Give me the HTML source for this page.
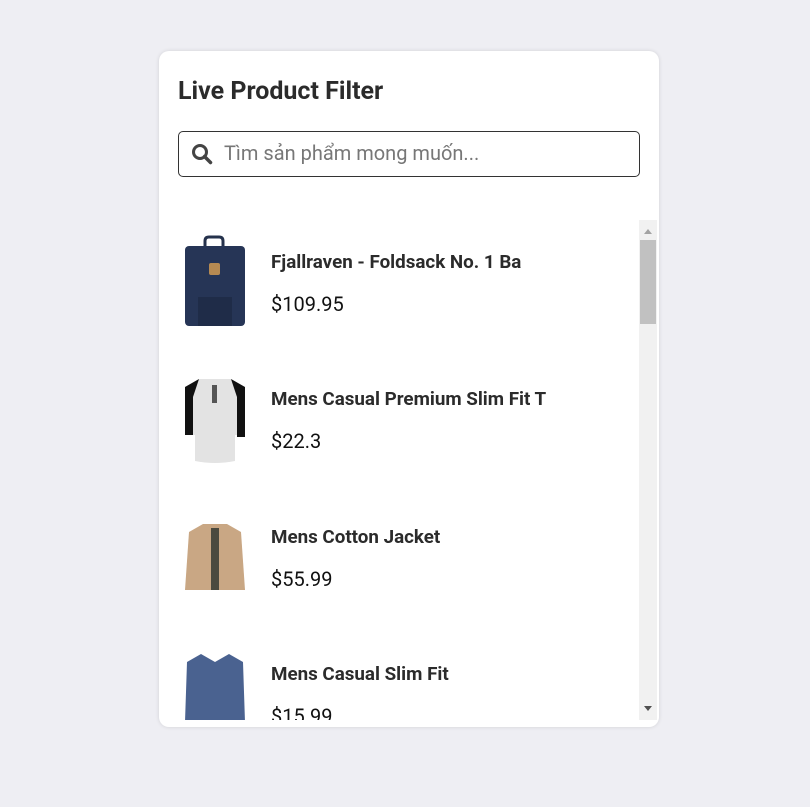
<!DOCTYPE html>
<html><head><meta charset="utf-8"><style>
html,body{margin:0;padding:0;background:#eeeef3;width:810px;height:807px;overflow:hidden;font-family:"Roboto","Liberation Sans",sans-serif;}
.card{position:absolute;left:159px;top:51px;width:500px;height:676px;background:#fff;border-radius:10px;box-shadow:0 0 4px rgba(0,0,0,.12);overflow:hidden;}
h1{position:absolute;left:19px;top:26px;margin:0;font-size:25px;font-weight:bold;color:#2b2b2b;}
.search{position:absolute;left:19px;top:80px;width:460px;height:44px;border:1px solid #333;border-radius:5px;}
.search svg{position:absolute;left:12px;top:11px}
.search span{position:absolute;left:45px;top:9px;font-size:20px;color:#777;}
.list{position:absolute;left:0;top:169px;width:500px;height:500px;overflow:hidden;}
.sb{position:absolute;left:480px;top:169px;width:18px;height:500px;background:#f1f1f1;}
.thumb{position:absolute;left:1px;top:20px;width:16px;height:84px;background:#c1c1c1;}
.item{position:absolute;left:0;width:480px;height:137px;}
.item svg{position:absolute;left:24px;}
.name{position:absolute;left:112px;font-size:18.8px;font-weight:bold;color:#2b2b2b;white-space:nowrap;}
.price{position:absolute;left:112px;font-size:20px;color:#111;}
</style></head><body>
<div class="card">
<h1>Live Product Filter</h1>
<div class="search">
<svg width="22" height="22" viewBox="0 0 22 22"><circle cx="9" cy="9" r="6.5" fill="none" stroke="#444" stroke-width="3"/><line x1="13.5" y1="13.5" x2="19.5" y2="19.5" stroke="#444" stroke-width="3.5" stroke-linecap="round"/></svg>
<span>Tìm sản phẩm mong muốn...</span>
</div>
<div class="list">
<div class="item" style="top:0">
<svg width="64" height="100" viewBox="0 0 64 100" style="top:15px"><path d="M22 12 V6 Q22 2 26 2 H36 Q40 2 40 6 V12" fill="none" stroke="#25324c" stroke-width="3"/><rect x="2" y="11" width="60" height="80" rx="4" fill="#263556"/><rect x="26" y="28" width="11" height="12" rx="2" fill="#b68a52"/><rect x="15" y="62" width="34" height="29" fill="#1f2c48"/></svg>
<div class="name" style="top:31px">Fjallraven - Foldsack No. 1 Ba</div>
<div class="price" style="top:72px">$109.95</div>
</div>
<div class="item" style="top:137px">
<svg width="64" height="90" viewBox="0 0 64 90" style="top:20px"><path d="M16 2 H48 L62 10 V58 H52 V84 Q32 88 12 84 V58 H2 V10 Z" fill="#e3e3e3"/><path d="M16 2 L2 10 V58 H10 V20 Z M48 2 L62 10 V60 H54 V20 Z" fill="#111"/><rect x="29" y="8" width="5" height="18" fill="#555"/></svg>
<div class="name" style="top:31px">Mens Casual Premium Slim Fit T</div>
<div class="price" style="top:72px">$22.3</div>
</div>
<div class="item" style="top:275px">
<svg width="64" height="72" viewBox="0 0 64 72" style="top:27px"><path d="M20 2 H44 L58 10 L62 68 H2 L6 10 Z" fill="#c9a784"/><rect x="28" y="6" width="8" height="62" fill="#4b4a3f"/></svg>
<div class="name" style="top:31px">Mens Cotton Jacket</div>
<div class="price" style="top:72px">$55.99</div>
</div>
<div class="item" style="top:412px">
<svg width="64" height="70" viewBox="0 0 64 70" style="top:20px"><path d="M18 2 L32 10 L46 2 L60 10 L62 70 H2 L4 10 Z" fill="#4a6290"/></svg>
<div class="name" style="top:31px">Mens Casual Slim Fit</div>
<div class="price" style="top:72px">$15.99</div>
</div>
</div>
<div class="sb"><div class="thumb"></div>
<svg width="18" height="500" style="position:absolute;left:0;top:0"><path d="M5 14 L9 9 L13 14 Z" fill="#a3a3a3"/><path d="M5 486 L9 491 L13 486 Z" fill="#505050"/></svg></div>
</div>
</body></html>
